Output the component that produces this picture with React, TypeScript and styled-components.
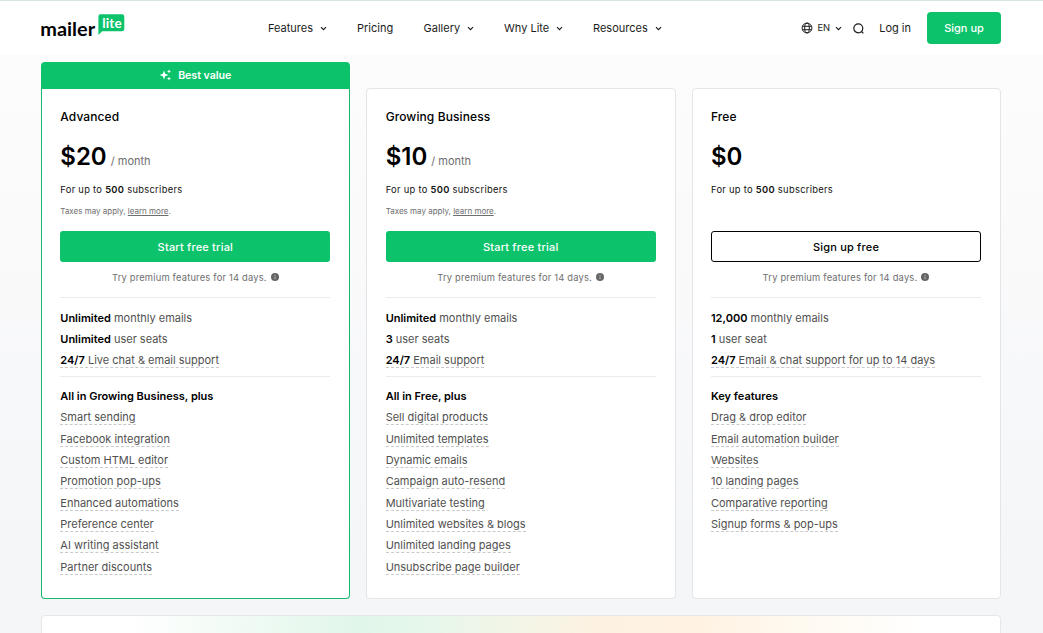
import React from 'react';
import styled, { createGlobalStyle, css } from 'styled-components';

const GlobalStyle = createGlobalStyle`
  * { box-sizing: border-box; }
  html, body { margin: 0; padding: 0; }
  body {
    height: 633px;
    overflow: hidden;
    font-family: Inter, "Liberation Sans", sans-serif;
    color: #000;
  }
`;

const GREEN = '#0cc36b';

const Page = styled.div`
  height: 633px;
  overflow: hidden;
  display: flex;
  flex-direction: column;
  background: linear-gradient(180deg, #fcfcfc 70px, #f5f6f8 560px);
`;

const Header = styled.header`
  height: 55px;
  flex: none;
  border-top: 1px solid #d9e4e0;
  background: #fff;
  display: flex;
  align-items: center;
  padding: 0 42px 0 41px;
`;

const Logo = styled.a`
  display: flex;
  width: 84px;
  height: 24px;
  margin-top: -5px;
`;

const Nav = styled.nav`
  display: flex;
  margin-left: 143px;
`;

const NavItem = styled.a<{ $w: number }>`
  display: flex;
  align-items: center;
  gap: 7px;
  width: ${(p) => p.$w}px;
  font-size: 11px;
  line-height: 16px;
  color: #1c1c1c;
  white-space: nowrap;
`;

const Tools = styled.div`
  display: flex;
  align-items: center;
  margin-left: auto;
  color: #1c1c1c;
`;

const Language = styled.div`
  display: flex;
  align-items: center;
  font-size: 9.4px;
  line-height: 16px;
  margin-right: 11px;
  svg:first-child { margin-right: 4px; }
  svg:last-child { margin-left: 5px; }
`;

const LoginLink = styled.a`
  font-size: 11px;
  line-height: 16px;
  margin: 0 16px 0 15px;
`;

const SignUp = styled.button`
  width: 74px;
  height: 32px;
  border: 0;
  padding: 0;
  border-radius: 4px;
  background: ${GREEN};
  color: #fff;
  font: 500 11px/16px Inter, sans-serif;
`;

const Main = styled.main`
  width: 960px;
  margin: 7px 0 0 41px;
  display: flex;
  flex-direction: column;
  gap: 16px;
`;

const Plans = styled.section`
  display: grid;
  grid-template-columns: repeat(3, 1fr);
  column-gap: 16px;
  height: 537px;
`;

const Plan = styled.article`
  display: flex;
  flex-direction: column;
`;

const Badge = styled.div<{ $visible: boolean }>`
  height: 26px;
  flex: none;
  display: flex;
  align-items: center;
  justify-content: center;
  gap: 6px;
  padding-right: 1px;
  border-radius: 4px 4px 0 0;
  color: #fff;
  font-size: 10.67px;
  font-weight: 600;
  letter-spacing: -0.05px;
  ${(p) => p.$visible && css`background: ${GREEN};`}
`;

const Card = styled.div<{ $featured: boolean }>`
  flex: 1;
  display: flex;
  flex-direction: column;
  align-items: stretch;
  padding: 16px 19px 0 18.3px;
  background: #fff;
  border: 1px solid ${(p) => (p.$featured ? '#16b86c' : '#e4e5e8')};
  border-radius: 4px;
  ${(p) => p.$featured && css`
    border-radius: 0 0 4px 4px;
    border-top-color: ${GREEN};
  `}
`;

const PlanName = styled.h2`
  margin: 0;
  font-size: 12px;
  font-weight: 500;
  line-height: 24px;
  letter-spacing: 0.1px;
`;

const PriceRow = styled.div`
  height: 40px;
  margin-top: 8px;
  display: flex;
  align-items: baseline;
  line-height: 40px;
`;

const Price = styled.span`
  font-size: 24px;
  font-weight: 600;
`;

const Period = styled.span`
  margin-left: 4px;
  font-size: 11px;
  color: #6e6e6e;
`;

const Quota = styled.div`
  margin-top: 4px;
  height: 18px;
  font-size: 9.33px;
  line-height: 18px;
  letter-spacing: 0.3px;
  color: #111;
  b { font-weight: 600; }
`;

const TaxNote = styled.div`
  margin-top: 3px;
  height: 18px;
  font-size: 8px;
  line-height: 18px;
  color: #6e6e6e;
`;

const PlanButton = styled.button<{ $outline: boolean }>`
  margin-top: 11px;
  height: 31px;
  flex: none;
  padding: 0;
  border-radius: 3px;
  border: ${(p) => (p.$outline ? '1px solid #000' : '0')};
  background: ${(p) => (p.$outline ? '#fff' : GREEN)};
  color: ${(p) => (p.$outline ? '#000' : '#fff')};
  font: 500 11px/16px Inter, sans-serif;
  letter-spacing: 0.2px;
`;

const TrialNote = styled.div`
  height: 30px;
  display: flex;
  align-items: center;
  justify-content: center;
  gap: 4px;
  font-size: 9.33px;
  letter-spacing: 0.2px;
  color: #6e6e6e;
`;

const Divider = styled.hr`
  width: 100%;
  height: 1px;
  margin: 5px 0 0;
  border: 0;
  background: #ebebed;
`;

const List = styled.ul<{ $top: number; $pitch: number }>`
  list-style: none;
  margin: ${(p) => p.$top}px 0 0;
  padding: 0;
  display: grid;
  grid-auto-rows: ${(p) => p.$pitch}px;
`;

const ListItem = styled.li`
  font-size: 11px;
  line-height: 21px;
  color: #505050;
  b { font-weight: 600; color: #000; }
`;

const Hint = styled.span`
  display: inline-block;
  height: 15px;
  line-height: 14px;
  border-bottom: 1px dashed #c9c9cd;
`;

const FeatureTitle = styled.h3`
  margin: 9px 0 0;
  font-size: 11px;
  font-weight: 600;
  line-height: 21px;
`;

const Banner = styled.section`
  height: 60px;
  border: 1px solid #e6e7e9;
  border-radius: 4px;
  background: linear-gradient(94deg, #fff 9%, #e1f6ea 33%, #e5f7eb 39%, #f2f5e7 49%, #fdf2e2 58%, #fff2e2 68%, #fff9ef 78%, #fff 92%);
`;

const Chevron = () => (
  <svg width="7" height="7" viewBox="0 0 7 7" fill="none" stroke="currentColor" strokeWidth="1.15">
    <path d="M1 2.2 3.5 4.7 6 2.2" />
  </svg>
);

const MailerLogo = () => (
  <svg width="84" height="24" viewBox="0 0 84 24">
    <path d="M60 0.3H81a2.3 2.3 0 0 1 2.3 2.3V15a2.3 2.3 0 0 1-2.3 2.3H61.2L57.4 21V2.6A2.3 2.3 0 0 1 60 .3Z" fill={GREEN} />
    <text x="-0.7" y="21.5" fontFamily="Lato" fontWeight="700" fontSize="19.3" textLength="54.8" lengthAdjust="spacingAndGlyphs">mailer</text>
    <text x="61.2" y="14.1" fontFamily="Lato" fontWeight="700" fontSize="13.5" fill="#fff" textLength="19.5">lite</text>
  </svg>
);

const Globe = () => (
  <svg width="12" height="12" viewBox="0 0 12 12" fill="none" stroke="currentColor" strokeWidth="1">
    <circle cx="6" cy="6" r="4.9" />
    <ellipse cx="6" cy="6" rx="2.3" ry="4.9" />
    <path d="M1.5 4.3h9M1.5 7.7h9" />
  </svg>
);

const SearchIcon = () => (
  <svg width="11" height="11" viewBox="0 0 11 11" fill="none" stroke="currentColor" strokeWidth="1.2">
    <circle cx="5.3" cy="5.3" r="4.5" />
    <path d="m8 8 2.4 2.4" />
  </svg>
);

const Sparkles = () => (
  <svg width="13" height="12" viewBox="0 0 13 12" fill="#fff">
    <path d="M5 1.6 6.2 4.8 9.4 6 6.2 7.2 5 10.4 3.8 7.2.6 6 3.8 4.8Z" />
    <path d="M10 .4l.6 1.4 1.4.6-1.4.6-.6 1.4-.6-1.4L8 2.4l1.4-.6ZM10 7.6l.6 1.4 1.4.6-1.4.6-.6 1.4-.6-1.4L8 9.6 9.4 9Z" />
  </svg>
);

const InfoIcon = () => (
  <svg width="8" height="8" viewBox="0 0 8 8">
    <circle cx="4" cy="4" r="4" fill="#666" />
    <path d="M4 1.8v1M4 3.5v2.6" stroke="#bbb" strokeWidth="1" />
  </svg>
);

const navItems = [
  { label: 'Features', width: 89, menu: true },
  { label: 'Pricing', width: 66.5, menu: false },
  { label: 'Gallery', width: 80.5, menu: true },
  { label: 'Why Lite', width: 89, menu: true },
  { label: 'Resources', width: 70, menu: true },
];

interface PlanData {
  name: string;
  price: string;
  paid: boolean;
  featured: boolean;
  stats: [string, string][];
  title: string;
  features: string[];
}

const plans: PlanData[] = [
  {
    name: 'Advanced', price: '$20', paid: true, featured: true,
    stats: [['Unlimited', 'monthly emails'], ['Unlimited', 'user seats'], ['24/7', 'Live chat & email support']],
    title: 'All in Growing Business, plus',
    features: ['Smart sending', 'Facebook integration', 'Custom HTML editor', 'Promotion pop-ups', 'Enhanced automations', 'Preference center', 'AI writing assistant', 'Partner discounts'],
  },
  {
    name: 'Growing Business', price: '$10', paid: true, featured: false,
    stats: [['Unlimited', 'monthly emails'], ['3', 'user seats'], ['24/7', 'Email support']],
    title: 'All in Free, plus',
    features: ['Sell digital products', 'Unlimited templates', 'Dynamic emails', 'Campaign auto-resend', 'Multivariate testing', 'Unlimited websites & blogs', 'Unlimited landing pages', 'Unsubscribe page builder'],
  },
  {
    name: 'Free', price: '$0', paid: false, featured: false,
    stats: [['12,000', 'monthly emails'], ['1', 'user seat'], ['24/7', 'Email & chat support for up to 14 days']],
    title: 'Key features',
    features: ['Drag & drop editor', 'Email automation builder', 'Websites', '10 landing pages', 'Comparative reporting', 'Signup forms & pop-ups'],
  },
];

const PlanCard = ({ plan }: { plan: PlanData }) => (
  <Plan>
    <Badge $visible={plan.featured}>
      {plan.featured && <><Sparkles />Best value</>}
    </Badge>
    <Card $featured={plan.featured}>
      <PlanName>{plan.name}</PlanName>
      <PriceRow>
        <Price>{plan.price}</Price>
        {plan.paid && <Period>/ month</Period>}
      </PriceRow>
      <Quota>For up to <b>500</b> subscribers</Quota>
      <TaxNote>{plan.paid && <>Taxes may apply, <u>learn more</u>.</>}</TaxNote>
      <PlanButton $outline={!plan.paid}>{plan.paid ? 'Start free trial' : 'Sign up free'}</PlanButton>
      <TrialNote>Try premium features for 14 days. <InfoIcon /></TrialNote>
      <Divider />
      <List $top={10} $pitch={21}>
        {plan.stats.map(([amount, text], i) => (
          <ListItem key={text}>
            {i === 2 ? <Hint><b>{amount}</b> {text}</Hint> : <><b>{amount}</b> {text}</>}
          </ListItem>
        ))}
      </List>
      <Divider />
      <FeatureTitle>{plan.title}</FeatureTitle>
      <List $top={0.4} $pitch={21.33}>
        {plan.features.map((f) => <ListItem key={f}><Hint>{f}</Hint></ListItem>)}
      </List>
    </Card>
  </Plan>
);

export default function App() {
  return (
    <Page>
      <GlobalStyle />
      <Header>
        <Logo aria-label="mailerlite"><MailerLogo /></Logo>
        <Nav>
          {navItems.map((n) => (
            <NavItem key={n.label} $w={n.width}>{n.label}{n.menu && <Chevron />}</NavItem>
          ))}
        </Nav>
        <Tools>
          <Language><Globe />EN<Chevron /></Language>
          <SearchIcon />
          <LoginLink>Log in</LoginLink>
          <SignUp>Sign up</SignUp>
        </Tools>
      </Header>
      <Main>
        <Plans>
          {plans.map((p) => <PlanCard key={p.name} plan={p} />)}
        </Plans>
        <Banner />
      </Main>
    </Page>
  );
}
